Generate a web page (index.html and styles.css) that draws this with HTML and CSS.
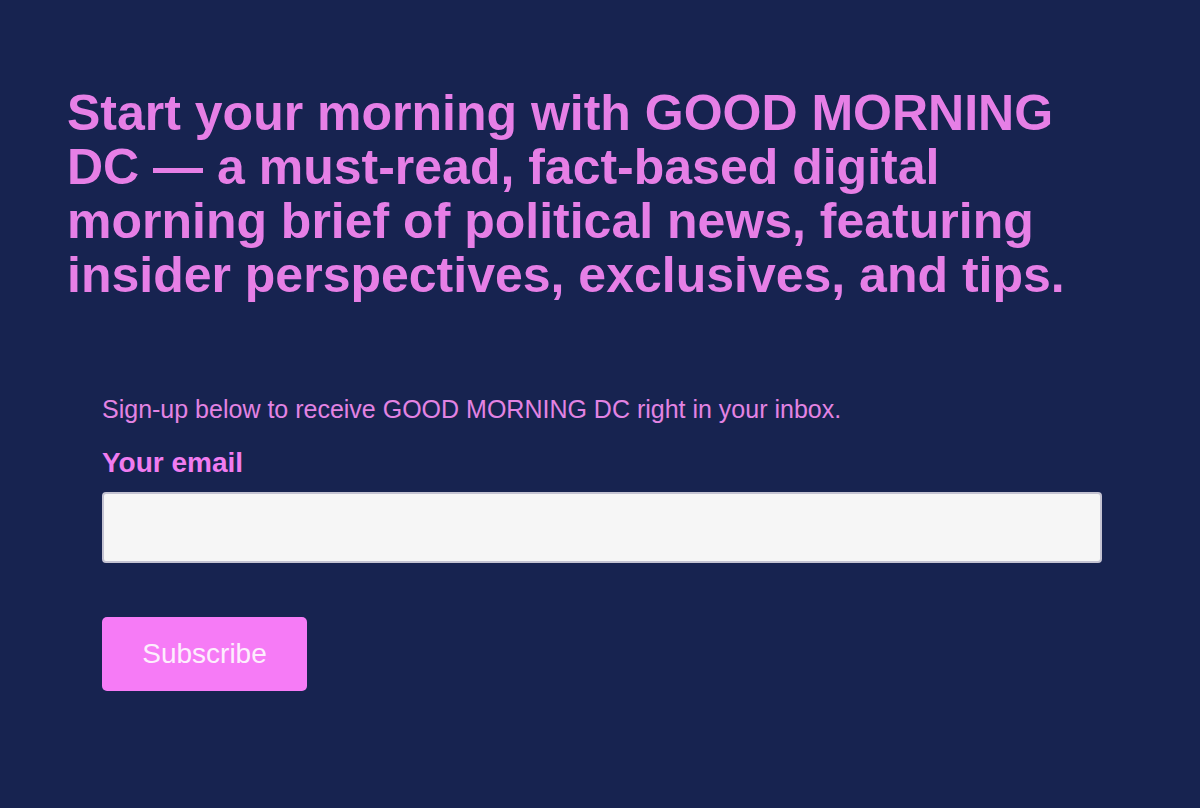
FILE: index.html
```html
<!DOCTYPE html>
<html>

<head>
    <title>Good Morning DC</title>
    <link rel="stylesheet" href="styles.css">
</head>

<body>
    <div class="page">
        <h1 class="intro">Start your morning with GOOD MORNING DC — a must-read, fact-based digital morning brief of political news, featuring insider perspectives, exclusives, and tips.</h1>
        <form class="signup" onsubmit="return false">
            <p class="signup-note">Sign-up below to receive GOOD MORNING DC right in your inbox.</p>
            <label class="signup-label" for="email">Your email</label>
            <input class="signup-input" type="email" id="email" name="email">
            <button class="signup-button" type="submit">Subscribe</button>
        </form>
    </div>
</body>

</html>
```

FILE: styles.css
```css
body {
    margin: 0;
    background-color: #172350;
    font-family: 'Liberation Sans', Arial, Helvetica, sans-serif;
}

.page {
    padding: 86px 0 0 67px;
}

.intro {
    width: 1000px;
    margin: 0;
    font-size: 50px;
    line-height: 54px;
    font-weight: bold;
    color: #e67fe6;
}

.signup {
    display: flex;
    flex-direction: column;
    align-items: flex-start;
    margin-top: 92px;
    padding-left: 35px;
}

.signup-note {
    margin: 0;
    font-size: 25px;
    line-height: 30px;
    color: #e383e3;
}

.signup-label {
    margin-top: 23px;
    font-size: 28px;
    line-height: 32px;
    font-weight: bold;
    color: #f07cf0;
}

.signup-input {
    box-sizing: border-box;
    width: 1000px;
    height: 71px;
    margin-top: 13px;
    border: 2px solid #c4c3d2;
    border-radius: 4px;
    background-color: #f6f6f6;
    font-family: inherit;
    font-size: 24px;
    padding: 0 16px;
}

.signup-button {
    width: 205px;
    height: 74px;
    margin-top: 54px;
    border: none;
    border-radius: 5px;
    background-color: #f67bf6;
    color: #fdeefd;
    font-family: inherit;
    font-size: 28px;
    cursor: pointer;
}
```
